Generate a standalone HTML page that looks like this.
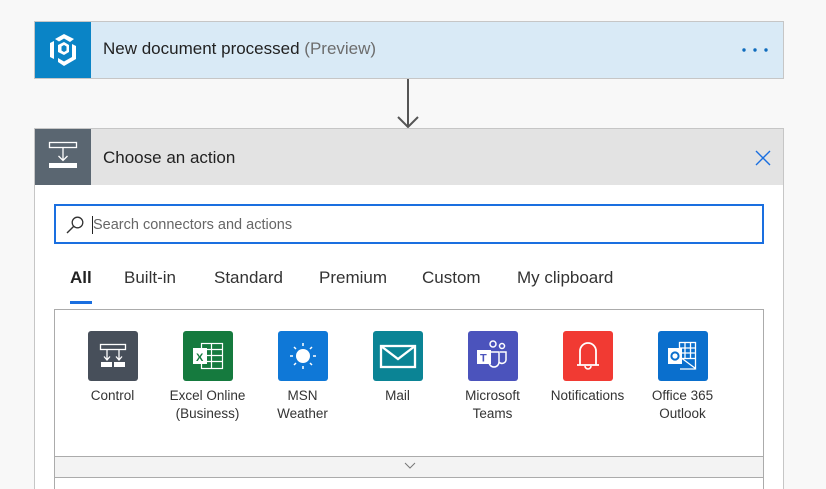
<!DOCTYPE html>
<html><head><meta charset="utf-8"><style>
*{margin:0;padding:0;box-sizing:border-box}
html,body{width:826px;height:489px;overflow:hidden}
body{background:#f8f8f8;font-family:"Segoe UI","Liberation Sans",sans-serif;position:relative;color:#222}
.abs{position:absolute}
svg{display:block}
.card1{left:34px;top:21px;width:750px;height:58px;background:#d9eaf6;border:1px solid #c6c6c6}
.card1 .ic{left:0;top:0;width:56px;height:56px;background:#0a84c6}
.t{font-size:17px;white-space:nowrap}
.card2{left:34px;top:128px;width:750px;height:361px;background:#fff;border:1px solid #c6c6c6;border-bottom:none;overflow:hidden}
.hdr{left:0;top:0;width:748px;height:56px;background:#e3e3e3}
.hdr .ic{left:0;top:0;width:56px;height:56px;background:#5a6671}
.search{left:19px;top:75px;width:710px;height:40px;border:2px solid #1a6fe0;background:#fff}
.tab{top:139px;font-size:17px;color:#333}
.box{left:19px;top:180px;width:710px;height:147px;border:1px solid #ababab;border-bottom:none}
.tile{width:50px;height:50px;border-radius:3px;top:21px}
.lbl{top:77px;width:95px;text-align:center;font-size:13.5px;line-height:18px;color:#333}
</style></head><body>
<div class="abs card1">
 <div class="abs ic"><svg width="56" height="56" viewBox="0 0 56 56"><g fill="#fff"><path d="M20 17 L29 12 L39 17 L35 20 L29 16.5 L24 19.5 Z"/><path d="M15 21 L19 19 L19 37 L15 35Z"/><path d="M23 40 L29 44 L41 37 L41 24 L37 22 L37 35 L29 39.5 L23 36Z"/><path d="M23 23 L29 20 L34 23 L34 30 L29 33 L23 30Z" /></g><path d="M26.5 24.5 L29 23 L31.5 24.5 L31.5 28.5 L29 30 L26.5 28.5Z" fill="#0a84c6"/></svg></div>
 <div class="abs t" style="left:68px;top:17px">New document processed <span style="color:#6d6d6d">(Preview)</span></div>
 <div class="abs" style="left:706px;top:25px"><svg width="30" height="6"><circle cx="3" cy="3" r="1.7" fill="#0f6cbd"/><circle cx="14" cy="3" r="1.7" fill="#0f6cbd"/><circle cx="25" cy="3" r="1.7" fill="#0f6cbd"/></svg></div>
</div>
<svg class="abs" style="left:395px;top:79px" width="26" height="50"><path d="M13 0 V48 M3 38 L13 48 L23 38" stroke="#555" stroke-width="2" fill="none"/></svg>
<div class="abs card2">
 <div class="abs hdr">
  <div class="abs ic"><svg width="56" height="56"><rect x="14.5" y="13.5" width="27" height="5" fill="none" stroke="#fff" stroke-width="1.3"/><path d="M28 19 V31 M23.5 27 L28 31.5 L32.5 27" stroke="#fff" stroke-width="1.3" fill="none"/><rect x="14" y="34" width="28" height="5" fill="#fff"/></svg></div>
  <div class="abs t" style="left:68px;top:19px">Choose an action</div>
  <svg class="abs" style="left:720px;top:21px" width="16" height="16"><path d="M1 1 L15 15 M15 1 L1 15" stroke="#1a6fe0" stroke-width="1.4"/></svg>
 </div>
 <div class="abs search">
  <svg class="abs" style="left:9px;top:9px" width="20" height="20"><circle cx="12.5" cy="7.5" r="5.3" fill="none" stroke="#333" stroke-width="1.3"/><path d="M8.8 11.2 L2 18" stroke="#333" stroke-width="1.4"/></svg>
  <div class="abs" style="left:36px;top:10px;width:1px;height:18px;background:#222"></div>
  <div class="abs" style="left:37px;top:11px;font-size:14.5px;color:#666">Search connectors and actions</div>
 </div>
 <div class="abs tab" style="left:35px;color:#222;font-weight:600">All</div>
 <div class="abs" style="left:35px;top:172px;width:22px;height:3px;background:#1a6fe0"></div>
 <div class="abs tab" style="left:89px">Built-in</div>
 <div class="abs tab" style="left:179px">Standard</div>
 <div class="abs tab" style="left:284px">Premium</div>
 <div class="abs tab" style="left:387px">Custom</div>
 <div class="abs tab" style="left:482px">My clipboard</div>
 <div class="abs box">
  <div class="abs tile" style="left:33px;background:#474f5a"><svg width="50" height="50"><g stroke="#fff" stroke-width="1.3" fill="none"><rect x="12.5" y="13.5" width="25" height="5"/><path d="M19 18.5 V29 M31 18.5 V29 M16 25.5 L19 29 L22 25.5 M28 25.5 L31 29 L34 25.5"/></g><rect x="13" y="31" width="11" height="5" fill="#fff"/><rect x="26" y="31" width="11" height="5" fill="#fff"/></svg></div>
  <div class="abs lbl" style="left:10px">Control</div>
  <div class="abs tile" style="left:128px;background:#157a3e"><svg width="50" height="50"><g stroke="#fff" stroke-width="1.2" fill="none"><rect x="18.5" y="12.5" width="21" height="25"/><path d="M18.5 18.5 H39.5 M18.5 24.5 H39.5 M18.5 30.5 H39.5 M28.5 12.5 V37.5"/></g><rect x="10" y="17" width="14" height="16" fill="#fff"/><text x="13" y="30" font-size="11" font-weight="bold" fill="#157a3e" font-family="Liberation Sans">X</text></svg></div>
  <div class="abs lbl" style="left:105px">Excel Online<br>(Business)</div>
  <div class="abs tile" style="left:223px;background:#0f78d7"><svg width="50" height="50"><circle cx="25" cy="25" r="7" fill="#fff"/><g stroke="#fff" stroke-width="1.5"><path d="M25 12v3M25 35v3M12 25h3M35 25h3M16 16l2 2M32 32l2 2M34 16l-2 2M16 34l2-2"/></g></svg></div>
  <div class="abs lbl" style="left:200px">MSN<br>Weather</div>
  <div class="abs tile" style="left:318px;background:#0b8495"><svg width="50" height="50"><rect x="8" y="15" width="34" height="21" fill="none" stroke="#fff" stroke-width="2.3"/><path d="M8 15 L25 28 L42 15" fill="none" stroke="#fff" stroke-width="2.3"/></svg></div>
  <div class="abs lbl" style="left:295px">Mail</div>
  <div class="abs tile" style="left:413px;background:#4b53bc"><svg width="50" height="50"><g fill="none" stroke="#fff" stroke-width="1.5"><circle cx="25" cy="13" r="3"/><circle cx="34" cy="15" r="2.5"/><path d="M22 21 H31 V31 A5 5 0 0 1 21 31 M32 21 H38 V29 A4 4 0 0 1 31 31"/></g><rect x="9" y="19" width="14" height="14" fill="#fff"/><text x="12" y="30.5" font-size="11" font-weight="bold" fill="#4b53bc" font-family="Liberation Sans">T</text></svg></div>
  <div class="abs lbl" style="left:390px">Microsoft<br>Teams</div>
  <div class="abs tile" style="left:508px;background:#f13a33"><svg width="50" height="50"><path d="M17 34 V20 A8 8 0 0 1 33 20 V34 Z M14 34 H36" fill="none" stroke="#fff" stroke-width="1.8"/><path d="M22 35 A3 3 0 0 0 28 35" fill="none" stroke="#fff" stroke-width="1.6"/></svg></div>
  <div class="abs lbl" style="left:485px">Notifications</div>
  <div class="abs tile" style="left:603px;background:#0a6fcd"><svg width="50" height="50"><g fill="none" stroke="#fff" stroke-width="1.3"><rect x="21.5" y="11.5" width="16" height="16"/><path d="M21.5 17h16M21.5 22h16M27 11.5v16M32.5 11.5v16M22 26 L37.5 37.5 V28 M22 38 H37.5"/></g><rect x="10" y="17" width="14" height="16" fill="#fff"/><circle cx="17" cy="25" r="3.6" fill="none" stroke="#0a6fcd" stroke-width="2"/></svg></div>
  <div class="abs lbl" style="left:580px">Office 365<br>Outlook</div>
 </div>
 <div class="abs" style="left:19px;top:327px;width:710px;height:22px;background:#f3f3f3;border:1px solid #ababab"><svg class="abs" style="left:349px;top:5px" width="12" height="8"><path d="M1 1 L6 6 L11 1" stroke="#777" fill="none"/></svg></div>
 <div class="abs" style="left:19px;top:349px;width:1px;height:12px;background:#ababab"></div>
 <div class="abs" style="left:728px;top:349px;width:1px;height:12px;background:#ababab"></div>
</div>
</body></html>
